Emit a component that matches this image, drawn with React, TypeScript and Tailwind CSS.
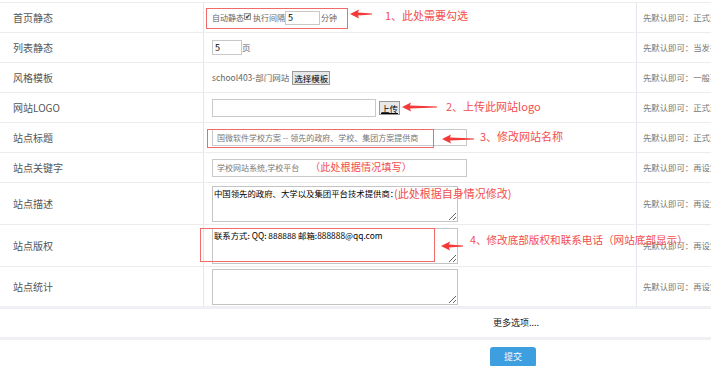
import React from "react";

const cjk = { fontFamily: '"Noto Sans CJK SC", "Noto Sans", sans-serif' };

function Arrow({ w }: { w: number }) {
  return (
    <svg width={w} height="10" viewBox={`0 0 ${w} 10`}>
      <polygon points={`0,5 9,0.5 8,3.6 ${w},4.4 ${w},5.6 8,6.4 9,9.5`} fill="#f23a3a" />
    </svg>
  );
}

function Row({ label, h, children, note, last }: { label: string; h: number; children?: React.ReactNode; note?: string; last?: boolean }) {
  return (
    <div className={`grid grid-cols-[204px_433px_1fr] ${last ? "border-b-[3px] border-[#eef0f3]" : "border-b border-[#ececec]"}`} style={{ height: h }}>
      <div className="flex items-center pl-[13px] text-[10px] text-[#555] border-r border-[#e3e6ec]">{label}</div>
      <div className="flex items-center pl-[8px] border-r border-[#e3e6ec]">{children}</div>
      <div className="flex items-center pl-[6px] text-[8.4px] text-[#777] overflow-hidden whitespace-nowrap">{note}</div>
    </div>
  );
}

export default function App() {
  const inputCls = "border border-[#c9c9c9] bg-white outline-none";
  const taCls = "w-[246px] h-[36px] border border-[#c4c4c4] text-[8.4px] text-black leading-[11px] px-[1px] py-[1px] outline-none resize-y block";
  return (
    <div className="relative w-[711px] h-[366px] bg-white overflow-hidden" style={cjk}>
      <div className="h-[3px] border-b border-[#ececec]" />
      <Row label="首页静态" h={30} note="先默认即可：正式运行">
        <div className="flex items-center text-[8px] text-[#666]">
          <span>自动静态</span>
          <span className="w-[7px] h-[7px] border border-[#999] bg-[#eee] text-[7px] leading-[6px] text-[#333] flex items-center justify-center mb-[3px]">✔</span>
          <span className="ml-[2px]">执行间隔</span>
          <div className={`${inputCls} w-[35px] h-[14px] text-[9px] text-black pl-[2px] leading-[12px]`}>5</div>
          <span className="ml-[1px]">分钟</span>
        </div>
      </Row>
      <Row label="列表静态" h={30} note="先默认即可：当发布">
        <div className="flex items-center text-[8.5px] text-[#666]">
          <div className={`${inputCls} w-[30px] h-[15px] text-[9px] text-black pl-[2px] leading-[13px]`}>5</div>
          <span>页</span>
        </div>
      </Row>
      <Row label="风格模板" h={30} note="先默认即可：一般不">
        <div className="flex items-center text-[8.5px] text-[#666]">
          <span>school403-部门网站</span>
          <span className="ml-[3px] border border-[#999] bg-[#e8e8e8] text-[8.5px] text-black px-[1px] h-[14px] leading-[12px]">选择模板</span>
        </div>
      </Row>
      <Row label="网站LOGO" h={30} note="先默认即可：正式运">
        <div className="flex items-center">
          <div className={`${inputCls} w-[164px] h-[18px]`} />
          <span className="ml-[3px] border border-[#999] bg-[#e8e8e8] text-[8.5px] text-black px-[1px] h-[14px] leading-[12px] underline">上传</span>
        </div>
      </Row>
      <Row label="站点标题" h={30} note="先默认即可：正式运">
        <div className={`${inputCls} w-[255px] h-[17px] text-[8px] text-[#777] pl-[4px] leading-[15px] whitespace-nowrap overflow-hidden`}>国微软件学校方案 -- 领先的政府、学校、集团方案提供商</div>
      </Row>
      <Row label="站点关键字" h={30} note="先默认即可：再设定">
        <div className={`${inputCls} w-[255px] h-[18px] text-[8px] text-[#777] pl-[4px] leading-[16px] whitespace-nowrap`}>学校网站系统,学校平台</div>
      </Row>
      <Row label="站点描述" h={42} note="先默认即可：再设定">
        <textarea readOnly className={taCls} defaultValue="中国领先的政府、大学以及集团平台技术提供商：" />
      </Row>
      <Row label="站点版权" h={42} note="先默认即可：再设定">
        <textarea readOnly className={taCls} defaultValue="联系方式: QQ: 888888 邮箱:888888@qq.com" />
      </Row>
      <Row label="站点统计" h={42} note="先默认即可：再设定" last>
        <textarea readOnly className={taCls} defaultValue="" />
      </Row>
      <div className="h-[31px] border-b-[3px] border-[#eef0f3] flex items-center pl-[493px] text-[9px] text-[#222]">更多选项....</div>
      <div className="pt-[7px] pl-[490px]">
        <div className="w-[46px] h-[20px] rounded-[3px] bg-[#3d9ee0] text-white text-[9px] flex items-center justify-center">提交</div>
      </div>

      {/* annotations */}
      <div className="absolute left-[206px] top-[8px] w-[142px] h-[21px] border border-[#f26b6b]" />
      <div className="absolute left-[350px] top-[9px]"><Arrow w={22} /></div>
      <div className="absolute left-[385px] top-[7px] text-[11px] text-[#f24d4d]">1、此处需要勾选</div>

      <div className="absolute left-[402px] top-[102px]"><Arrow w={35} /></div>
      <div className="absolute left-[446px] top-[98px] text-[11px] text-[#f24d4d]">2、上传此网站logo</div>

      <div className="absolute left-[207px] top-[129px] w-[227px] h-[19px] border border-[#f26b6b]" />
      <div className="absolute left-[442px] top-[134px]"><Arrow w={32} /></div>
      <div className="absolute left-[480px] top-[128px] text-[11px] text-[#f24d4d]">3、修改网站名称</div>

      <div className="absolute left-[310px] top-[159px] text-[10.2px] text-[#f24d4d]">（此处根据情况填写）</div>
      <div className="absolute left-[394px] top-[185px] text-[11px] text-[#f24d4d]">(此处根据自身情况修改)</div>

      <div className="absolute left-[200px] top-[228px] w-[235px] h-[34px] border border-[#f26b6b]" />
      <div className="absolute left-[441px] top-[241px]"><Arrow w={22} /></div>
      <div className="absolute left-[470px] top-[232px] text-[10.6px] text-[#f24d4d] whitespace-nowrap">4、修改底部版权和联系电话（网站底部显示）</div>
    </div>
  );
}
